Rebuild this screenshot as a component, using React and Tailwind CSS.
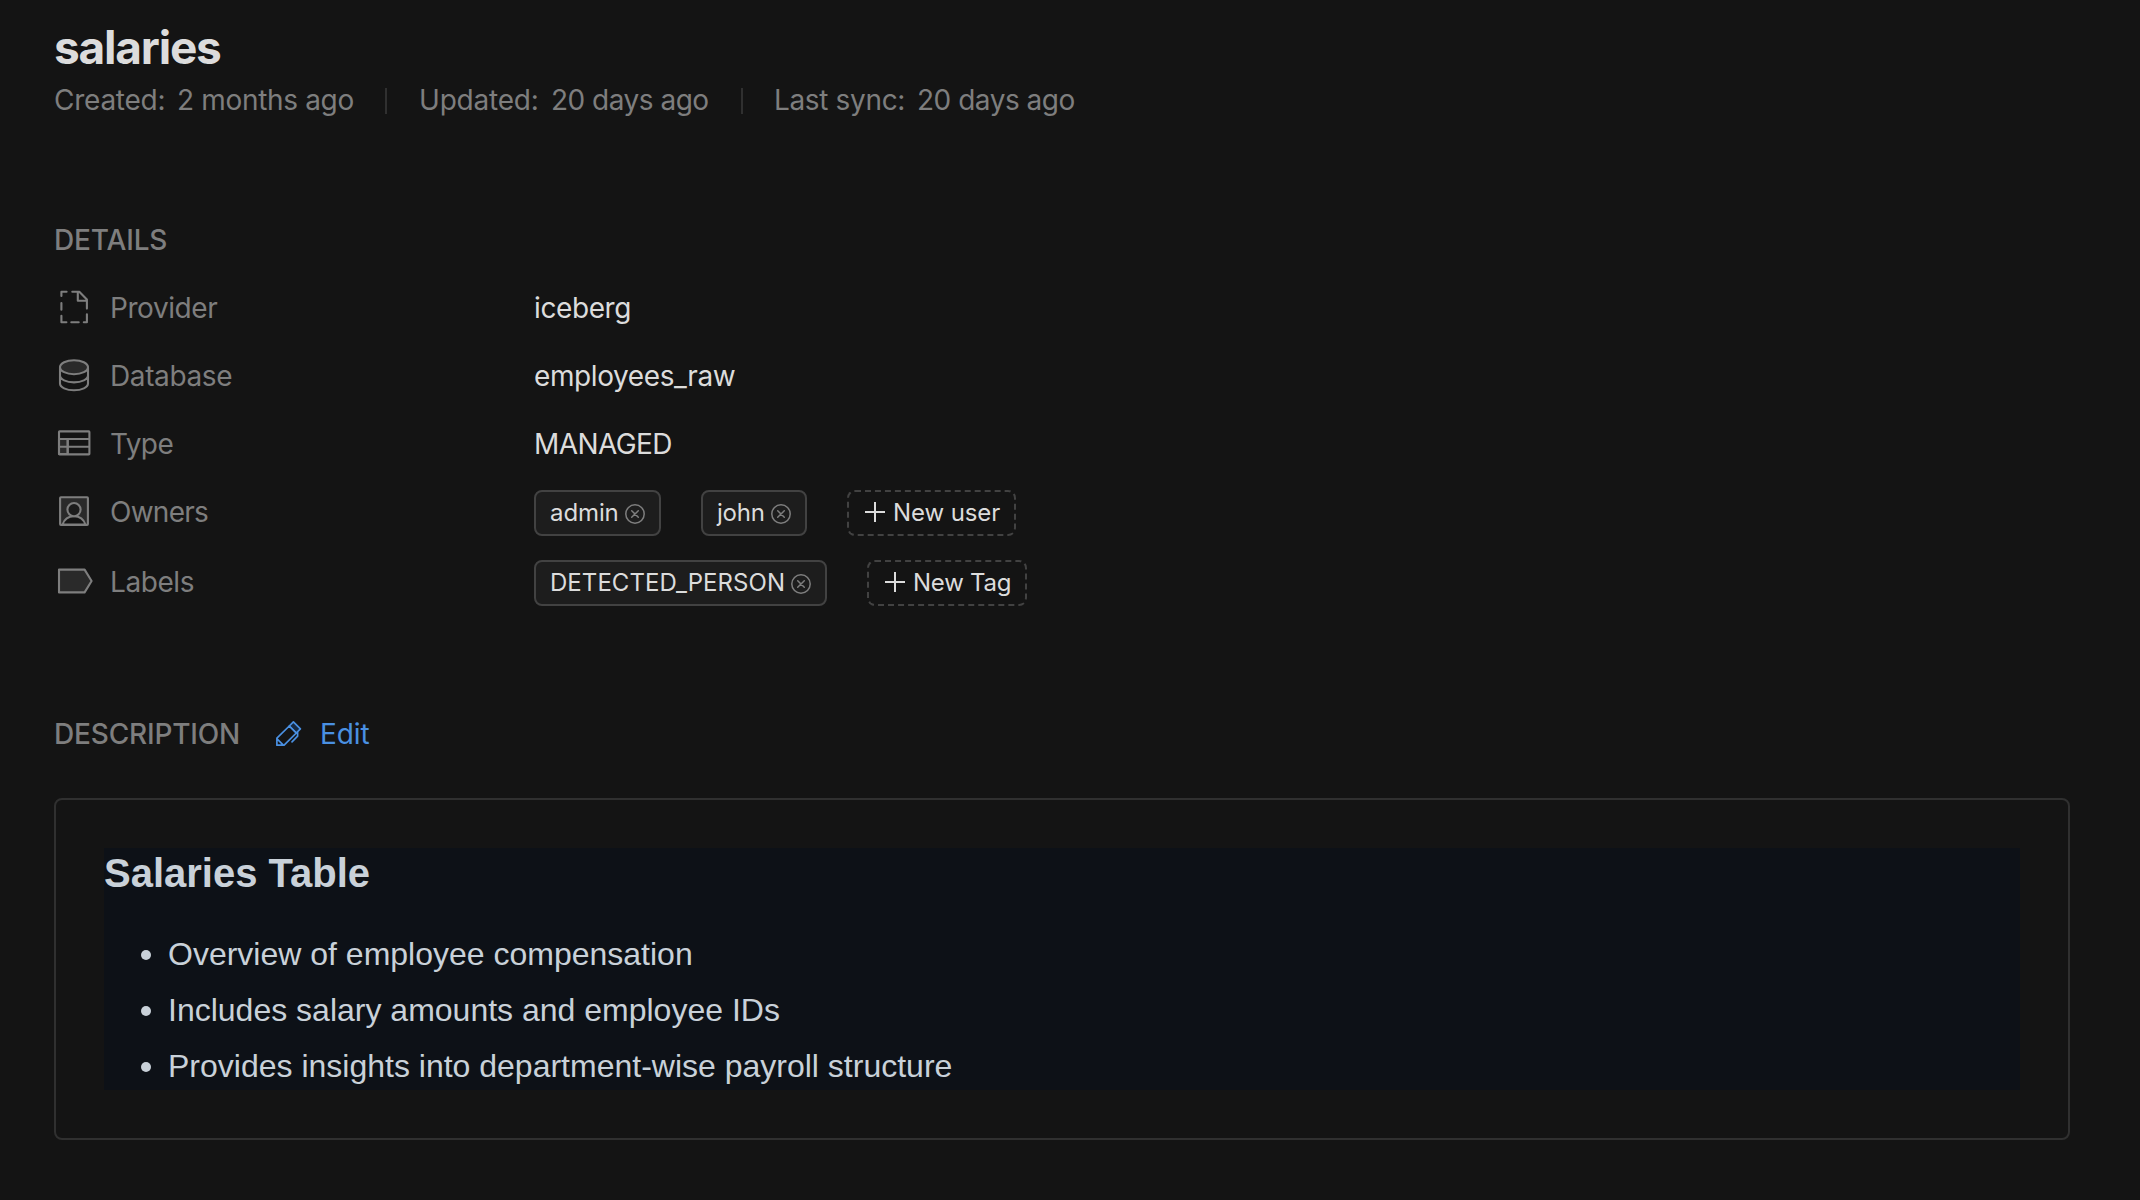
import React from "react";

const GREY = "#7e7e7e";
const FILL = "#2a2a2a";

function RowIcon({ viewBox, children }) {
  return (
    <svg width="40" height="44" viewBox={viewBox} fill="none" stroke={GREY} strokeWidth="2.1" strokeLinejoin="round" strokeLinecap="round" className="shrink-0">
      {children}
    </svg>
  );
}

const ProviderIcon = () => (
  <RowIcon viewBox="54 286 40 44">
    <path d="M61.4 296v-4.2h5.2M72.3 291.8h7l7.6 7.8v9M77.8 292.5v8.2h8.6M61.4 303v6.7M61.4 315.7v6.5h5M71.3 322.2h7.4M83.8 322.2h3.1v-7.9" />
  </RowIcon>
);

const DatabaseIcon = () => (
  <RowIcon viewBox="54 354 40 44">
    <path d="M60 367.4v16.1c0 3.8 6.3 6.8 14 6.8s14-3 14-6.8v-16.1M60 375.6c0 3.8 6.3 6.8 14 6.8s14-3 14-6.8" />
    <ellipse cx="74" cy="367.2" rx="14" ry="7" fill={FILL} />
  </RowIcon>
);

const TypeIcon = () => (
  <RowIcon viewBox="54 422 40 44">
    <path d="M59 439h8.7v15H59z" fill={FILL} />
    <rect x="59" y="431.4" width="30.4" height="23" rx="0.6" />
    <path d="M59 439h30M59 446.8h30M67.7 439v15" />
  </RowIcon>
);

const OwnersIcon = () => (
  <RowIcon viewBox="54 490 40 44">
    <rect x="60.1" y="497.3" width="27.8" height="27.6" rx="0.8" fill={FILL} />
    <path d="M62.6 524.6c1.6-5 6-8.3 11.4-8.3s9.8 3.3 11.4 8.3z" fill="#141414" />
    <circle cx="74" cy="509.6" r="6.6" fill="#1c1c1c" />
  </RowIcon>
);

const LabelsIcon = () => (
  <RowIcon viewBox="54 560 40 44">
    <path d="M59 569.6h25.6l7 11.4-7 11.4H59z" fill={FILL} />
  </RowIcon>
);

const PencilIcon = () => (
  <svg width="28" height="28" viewBox="275 720 28 28" fill="none" stroke="#4a90e2" strokeWidth="1.7" strokeLinejoin="round" strokeLinecap="round">
    <path d="M289.3 726l4.1-4.2 7 7-4.1 4.2z" fill="#172a42" />
    <path d="M276.9 738.2l12.4-12.2 7 7-12.2 12.2h-7.2zM277 738.8l6.4 6.3M297.6 732.6v3.6l-5.6 5.7" />
  </svg>
);

const CloseIcon = () => (
  <svg width="20" height="20" viewBox="0 0 20 20" fill="none" stroke={GREY} strokeWidth="1.5" strokeLinecap="round">
    <circle cx="10" cy="10" r="9.2" />
    <path d="M6.7 6.7l6.6 6.6M13.3 6.7l-6.6 6.6" />
  </svg>
);

const PlusIcon = () => (
  <svg width="20" height="20" viewBox="0 0 20 20" fill="none" stroke="#dcdcdc" strokeWidth="2">
    <path d="M10 0v20M0 10h20" />
  </svg>
);

function Chip({ width, label, cls }) {
  return (
    <div className={"flex h-[46px] items-center justify-between rounded-lg border-2 border-[#424242] bg-[#1d1d1d] px-3.5 text-2xl/[42px] " + width}>
      <span className={cls}>{label}</span>
      <span className="mt-0.5">
        <CloseIcon />
      </span>
    </div>
  );
}

function AddChip({ width, label, cls }) {
  return (
    <div className={"flex h-[46px] items-center rounded-lg border-2 border-dashed border-[#424242] pl-4 text-2xl/[42px] " + width}>
      <span className="-mt-0.5">
        <PlusIcon />
      </span>
      <span className={"ml-2 whitespace-nowrap " + cls}>{label}</span>
    </div>
  );
}

function Row({ icon, label, labelCls, children, className = "" }) {
  return (
    <div className={"flex " + className}>
      <div className="flex w-[480px] shrink-0 gap-4 text-[#7e7e7e]">
        {icon}
        <span className={labelCls}>{label}</span>
      </div>
      {children}
    </div>
  );
}

export default function App() {
  return (
    <main className="h-[1200px] w-[2140px] bg-[#141414] pl-[54px] pt-[15px] font-[Inter,sans-serif] text-[28px]/[44px] text-[#dcdcdc]">
      <h1 className="h-[63px] text-[46px]/[65px] font-bold tracking-[-1.21px]">salaries</h1>
      <div className="flex items-center whitespace-nowrap text-[#7e7e7e]">
        <span className="w-[123px] tracking-[-0.25px]">Created:</span>
        <span className="w-[208px] tracking-[-0.33px]">2 months ago</span>
        <span className="mt-0.5 h-[26px] w-0.5 bg-[#303030]" />
        <span className="ml-8 w-[132px] tracking-[-0.2px]">Updated:</span>
        <span className="w-[190px] tracking-[-0.5px]">20 days ago</span>
        <span className="mt-0.5 h-[26px] w-0.5 bg-[#303030]" />
        <span className="ml-[31px] w-[143px] tracking-[-0.35px]">Last sync:</span>
        <span className="tracking-[-0.48px]">20 days ago</span>
      </div>

      <section className="mt-24">
        <h2 className="font-medium tracking-[-0.16px] text-[#7e7e7e]">DETAILS</h2>
        <div className="mt-6 flex flex-col gap-6">
          <Row icon={<ProviderIcon />} label="Provider" labelCls="tracking-[-0.43px]">
            <span className="tracking-[-0.4px]">iceberg</span>
          </Row>
          <Row icon={<DatabaseIcon />} label="Database" labelCls="tracking-[-0.38px]">
            <span className="tracking-[-0.4px]">employees_raw</span>
          </Row>
          <Row icon={<TypeIcon />} label="Type" labelCls="tracking-[-0.6px]">
            <span className="tracking-[-0.58px]">MANAGED</span>
          </Row>
          <Row icon={<OwnersIcon />} label="Owners" labelCls="tracking-[-0.74px]" className="h-[46px]">
            <div className="flex gap-10">
              <Chip width="w-[127px]" label="admin" cls="tracking-[-0.1px]" />
              <Chip width="w-[106px]" label="john" cls="tracking-[-0.2px]" />
              <AddChip width="w-[169px]" label="New user" cls="tracking-[-0.1px]" />
            </div>
          </Row>
          <Row icon={<LabelsIcon />} label="Labels" labelCls="tracking-[-0.42px]" className="h-[46px]">
            <div className="flex gap-10">
              <Chip width="w-[293px]" label="DETECTED_PERSON" cls="tracking-[0.05px]" />
              <AddChip width="w-40" label="New Tag" cls="tracking-[-0.25px]" />
            </div>
          </Row>
        </div>
      </section>

      <section className="mt-[106px]">
        <div className="flex h-11 items-center">
          <h2 className="w-[221px] font-medium tracking-[-0.18px] text-[#7e7e7e]">DESCRIPTION</h2>
          <PencilIcon />
          <a className="ml-[17px] tracking-[-0.12px] text-[#4a90e2]">Edit</a>
        </div>
        <div className="mt-[42px] h-[342px] w-[2016px] rounded-lg border-2 border-[#303030] p-12">
          <article className="bg-[#0d1117] font-['Liberation_Sans',sans-serif] text-[32px]/[48px] text-[#c9d1d9]">
            <h3 className="text-[40px]/[50px] font-bold">Salaries Table</h3>
            <ul className="mt-8 flex flex-col gap-2">
              {[
                "Overview of employee compensation",
                "Includes salary amounts and employee IDs",
                "Provides insights into department-wise payroll structure",
              ].map((item) => (
                <li key={item} className="flex items-center gap-[17px] pl-[37px]">
                  <span className="mt-0.5 size-2.5 rounded-full bg-[#c9d1d9]" />
                  {item}
                </li>
              ))}
            </ul>
          </article>
        </div>
      </section>
    </main>
  );
}
